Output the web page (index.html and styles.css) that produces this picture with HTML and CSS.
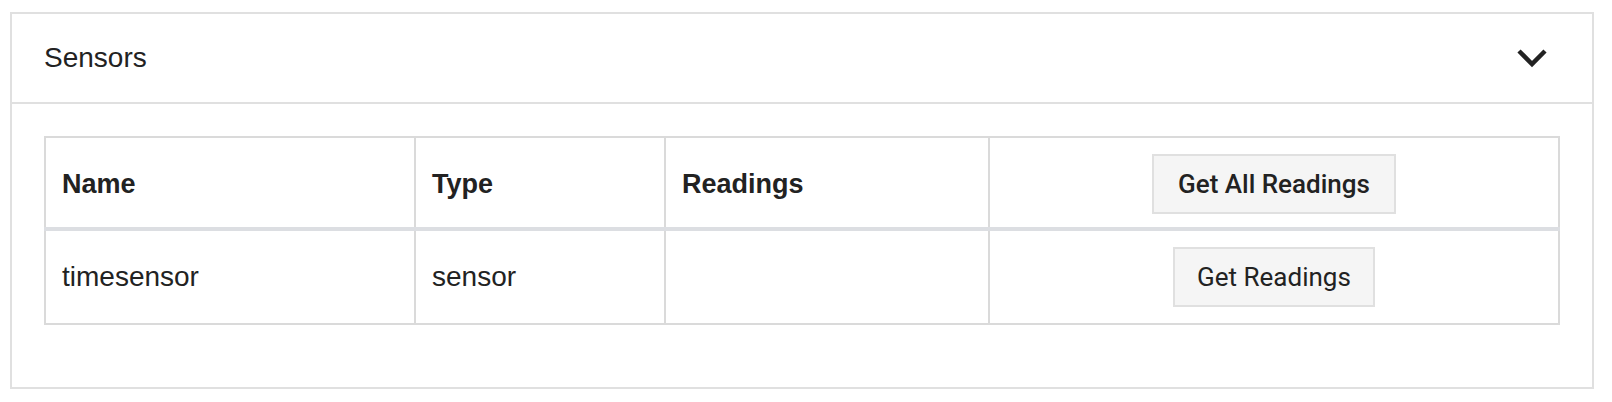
FILE: index.html
```html
<!DOCTYPE html>
<html lang="en">
<head>
    <meta charset="UTF-8">
    <meta name="viewport" content="width=device-width, initial-scale=1.0">
    <title>Sensors</title>
    <link rel="stylesheet" href="styles.css">
</head>
<body>
    <!-- Sensors panel -->
    <section class="panel">
        <div class="panel-header">
            <h2>Sensors</h2>
            <svg class="chevron" width="32" height="20" viewBox="0 0 32 20" aria-hidden="true">
                <polyline points="3,3 16,16 29,3" />
            </svg>
        </div>
        <div class="panel-body">
            <table class="sensor-table">
                <colgroup>
                    <col class="col-name">
                    <col class="col-type">
                    <col class="col-readings">
                    <col>
                </colgroup>
                <thead>
                    <tr>
                        <th>Name</th>
                        <th>Type</th>
                        <th>Readings</th>
                        <th class="actions"><button class="btn btn-strong">Get All Readings</button></th>
                    </tr>
                </thead>
                <tbody>
                    <tr>
                        <td>timesensor</td>
                        <td>sensor</td>
                        <td></td>
                        <td class="actions"><button class="btn">Get Readings</button></td>
                    </tr>
                </tbody>
            </table>
        </div>
    </section>
</body>
</html>
```

FILE: styles.css
```css
body {
    margin: 0;
    font-family: "Liberation Sans", Arial, sans-serif;
    color: #222;
    background: #fff;
}

.panel {
    margin: 12px 18px 0 10px;
    border: 2px solid #e0e0e0;
}

.panel-header {
    display: flex;
    align-items: center;
    justify-content: space-between;
    height: 88px;
    padding: 0 32px;
    border-bottom: 2px solid #e0e0e0;
}

.panel-header h2 {
    margin: 0;
    font-size: 28px;
    font-weight: normal;
    line-height: 1;
}

.chevron {
    margin-right: 12px;
}

.chevron polyline {
    fill: none;
    stroke: #222;
    stroke-width: 4.5;
}

.panel-body {
    padding: 32px 32px 62px;
}

.sensor-table {
    width: 100%;
    border-collapse: collapse;
    table-layout: fixed;
}

.col-name {
    width: 370px;
}

.col-type {
    width: 250px;
}

.col-readings {
    width: 324px;
}

.sensor-table th,
.sensor-table td {
    border: 2px solid #dadada;
    padding: 16px;
    text-align: left;
    vertical-align: middle;
    font-size: 28px;
}

.sensor-table th {
    padding-bottom: 13px;
    font-size: 27px;
    font-weight: bold;
    border-bottom: 4px solid #dcdee2;
}

.sensor-table .actions {
    text-align: center;
}

.btn {
    height: 60px;
    padding: 0 22px;
    font-family: Roboto, "Liberation Sans", sans-serif;
    font-size: 26px;
    color: #222;
    background: #f5f5f5;
    border: 2px solid #e0e0e0;
    border-radius: 0;
    cursor: pointer;
}

.btn-strong {
    padding: 0 24px;
    font-weight: 500;
}
```
